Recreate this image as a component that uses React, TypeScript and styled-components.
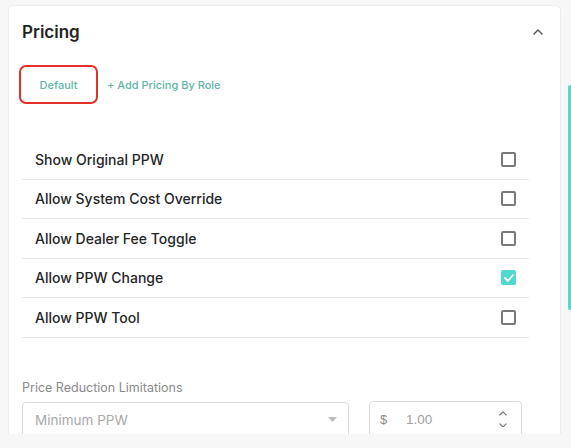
import React from "react";
import styled, { createGlobalStyle } from "styled-components";

const Global = createGlobalStyle`
  html, body { margin: 0; padding: 0; background: #f7f7f7; }
  body { font-family: Inter, "Noto Sans", sans-serif; }
  * { box-sizing: border-box; }
`;

const Page = styled.div`
  width: 571px;
  height: 448px;
  display: flex;
  flex-direction: column;
  background: #f7f7f7;
  overflow: hidden;
`;

const Viewport = styled.div`
  height: 434px;
  display: flex;
  overflow: hidden;
  flex: none;
`;

const Main = styled.div`
  flex: 1;
  padding: 5px 0 0 8px;
`;

const Track = styled.div`
  width: 10px;
  flex: none;
  display: flex;
  justify-content: flex-end;
  padding-top: 85px;
`;

const Thumb = styled.div`
  width: 3px;
  height: 225px;
  background: #4fd9cf;
  border-radius: 2px 0 0 2px;
`;

const Card = styled.div`
  background: #fff;
  border: 1px solid #ececec;
  border-radius: 5px;
  padding: 14px 0 0 13px;
  height: 600px;
`;

const Header = styled.div`
  display: flex;
  align-items: center;
  justify-content: space-between;
  padding-right: 17px;
  height: 24px;
`;

const Title = styled.h2`
  margin: 0;
  font-size: 17px;
  font-weight: 600;
  color: #232323;
  line-height: 24px;
`;

const Tabs = styled.div`
  display: flex;
  align-items: center;
  gap: 9px;
  margin: 21px 0 0 -3px;
`;

const TabButton = styled.button<{ $active?: boolean }>`
  width: 79px;
  height: 39px;
  border: ${(p) => (p.$active ? "2px solid #e5302a" : "none")};
  border-radius: 7px;
  background: #fff;
  color: #5fb4a6;
  font-family: Inter, sans-serif;
  font-size: 11px;
  font-weight: 500;
  padding: 0;
`;

const AddLink = styled.span`
  color: #5fb4a6;
  font-size: 11px;
  font-weight: 500;
`;

const List = styled.div`
  margin-top: 36px;
  width: 507px;
`;

const Row = styled.div`
  height: 39.5px;
  display: flex;
  align-items: center;
  justify-content: space-between;
  padding: 0 13px;
  border-bottom: 1px solid #e6e6e6;
`;

const RowLabel = styled.span`
  font-size: 14px;
  font-weight: 500;
  color: #262626;
`;

const Box = styled.span<{ $checked?: boolean }>`
  width: 15px;
  height: 15px;
  border-radius: 2px;
  border: ${(p) => (p.$checked ? "none" : "2px solid #7a7a7a")};
  background: ${(p) => (p.$checked ? "#4fd9cf" : "#fff")};
  display: flex;
  align-items: center;
  justify-content: center;
`;

const SectionLabel = styled.div`
  margin-top: 42px;
  font-size: 12.5px;
  color: #8a8a8a;
  line-height: 16px;
`;

const Fields = styled.div`
  display: flex;
  gap: 20px;
  margin-top: 6px;
`;

const Select = styled.div`
  width: 327px;
  height: 36px;
  border: 1px solid #dcdcdc;
  border-radius: 4px;
  display: flex;
  align-items: center;
  justify-content: space-between;
  padding: 0 11px 0 12px;
  color: #a8a8a8;
  font-size: 13.5px;
`;

const NumberField = styled.div`
  width: 153px;
  height: 37px;
  margin-top: -1px;
  border: 1px solid #dcdcdc;
  border-radius: 4px;
  display: flex;
  align-items: center;
  padding: 0 14px 0 10px;
  color: #9a9a9a;
  font-size: 13px;
`;

const Prefix = styled.span`
  width: 26px;
  font-family: "Liberation Sans", Arial, sans-serif;
  color: #8a8a8a;
`;

const Value = styled.span`
  flex: 1;
  font-family: "Liberation Sans", Arial, sans-serif;
  font-size: 13.5px;
  color: #a0a0a0;
`;

const Spinner = styled.div`
  display: flex;
  flex-direction: column;
  gap: 7px;
`;

const Chevron = ({ up, color = "#666", w = 10 }: { up?: boolean; color?: string; w?: number }) => (
  <svg width={w} height={w * 0.6} viewBox="0 0 10 6" fill="none">
    <path
      d={up ? "M1 5 L5 1 L9 5" : "M1 1 L5 5 L9 1"}
      stroke={color}
      strokeWidth="1.4"
      strokeLinecap="round"
      strokeLinejoin="round"
    />
  </svg>
);

const rows = [
  { label: "Show Original PPW", checked: false },
  { label: "Allow System Cost Override", checked: false },
  { label: "Allow Dealer Fee Toggle", checked: false },
  { label: "Allow PPW Change", checked: true },
  { label: "Allow PPW Tool", checked: false },
];

export default function App() {
  return (
    <>
      <Global />
      <Page>
        <Viewport>
          <Main>
            <Card>
              <Header>
                <Title>Pricing</Title>
                <Chevron up color="#555" />
              </Header>
              <Tabs>
                <TabButton $active>Default</TabButton>
                <AddLink>+ Add Pricing By Role</AddLink>
              </Tabs>
              <List>
                {rows.map((r) => (
                  <Row key={r.label}>
                    <RowLabel>{r.label}</RowLabel>
                    <Box $checked={r.checked}>
                      {r.checked && (
                        <svg width="10" height="8" viewBox="0 0 10 8" fill="none">
                          <path
                            d="M1 4 L4 7 L9 1"
                            stroke="#fff"
                            strokeWidth="1.8"
                            strokeLinecap="round"
                            strokeLinejoin="round"
                          />
                        </svg>
                      )}
                    </Box>
                  </Row>
                ))}
              </List>
              <SectionLabel>Price Reduction Limitations</SectionLabel>
              <Fields>
                <Select>
                  <span>Minimum PPW</span>
                  <svg width="9" height="5" viewBox="0 0 9 5">
                    <path d="M0 0 L9 0 L4.5 5 Z" fill="#bdbdbd" />
                  </svg>
                </Select>
                <NumberField>
                  <Prefix>$</Prefix>
                  <Value>1.00</Value>
                  <Spinner>
                    <Chevron up color="#777" w={8} />
                    <Chevron color="#777" w={8} />
                  </Spinner>
                </NumberField>
              </Fields>
            </Card>
          </Main>
          <Track>
            <Thumb />
          </Track>
        </Viewport>
      </Page>
    </>
  );
}
